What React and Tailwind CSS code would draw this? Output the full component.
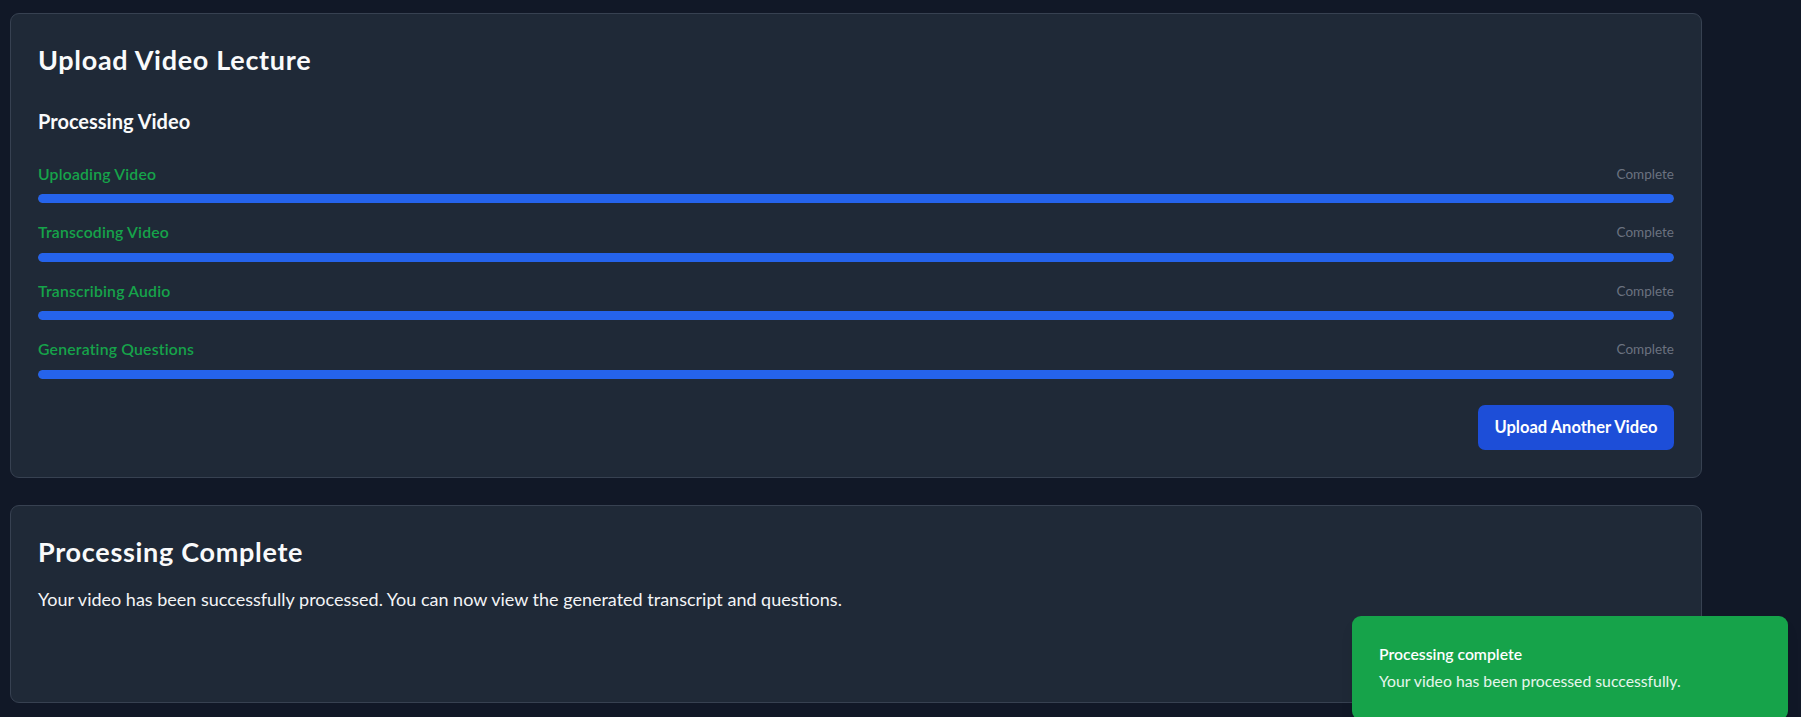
import React from "react";

const steps = [
  "Uploading Video",
  "Transcoding Video",
  "Transcribing Audio",
  "Generating Questions",
];

export default function App() {
  return (
    <div className="relative min-h-[717px] w-full overflow-hidden bg-[#111827] pl-[10px] pt-[13px] font-[family-name:Lato,sans-serif] text-white">
      <div className="flex w-[1692px] flex-col gap-[27px]">
        <div className="rounded-[9px] border border-[#374151] bg-[#1f2937] p-[27px]">
          <h2 className="mb-[28px] pt-[1px] text-[27px] font-bold leading-[36px] tracking-[0.7px] text-[#f9fafb]">
            Upload Video Lecture
          </h2>
          <h3 className="mb-[24px] text-[20px] font-bold leading-[31.5px] text-[#f9fafb]">
            Processing Video
          </h3>
          <div className="flex flex-col gap-[17px]">
            {steps.map((s) => (
              <div key={s}>
                <div className="mb-[9px] flex items-center justify-between pt-[1px] leading-[22.5px]">
                  <span className="text-[15.75px] font-semibold tracking-[0.2px] text-[#16a34a]">{s}</span>
                  <span className="text-[13.5px] text-[#6b7280]">Complete</span>
                </div>
                <div className="h-[9px] w-full overflow-hidden rounded-full bg-[#374151]">
                  <div className="h-full w-full rounded-full bg-[#2563eb]" />
                </div>
              </div>
            ))}
          </div>
          <div className="mt-[26px] flex justify-end">
            <button className="h-[45px] w-[196px] rounded-[7px] bg-[#1d4ed8] text-[16.5px] font-bold text-white">
              Upload Another Video
            </button>
          </div>
        </div>

        <div className="rounded-[9px] border border-[#374151] bg-[#1f2937] p-[27px]">
          <h2 className="mb-[16px] pt-[1px] text-[27px] font-bold leading-[36px] tracking-[0.7px] text-[#f9fafb]">
            Processing Complete
          </h2>
          <p className="text-[18px] leading-[27px] text-[#f3f4f6]">
            Your video has been successfully processed. You can now view the generated transcript and questions.
          </p>
          <div className="mt-[18px] h-[44px]" />
        </div>
      </div>

      <div className="absolute left-[1352px] top-[616px] w-[436px] rounded-[9px] bg-[#16a34a] p-[27px] shadow-lg">
        <div className="text-[15.75px] font-semibold leading-[22.5px] text-white">Processing complete</div>
        <div className="mt-[4.5px] text-[15.75px] leading-[22.5px] text-white/90">
          Your video has been processed successfully.
        </div>
      </div>
    </div>
  );
}
